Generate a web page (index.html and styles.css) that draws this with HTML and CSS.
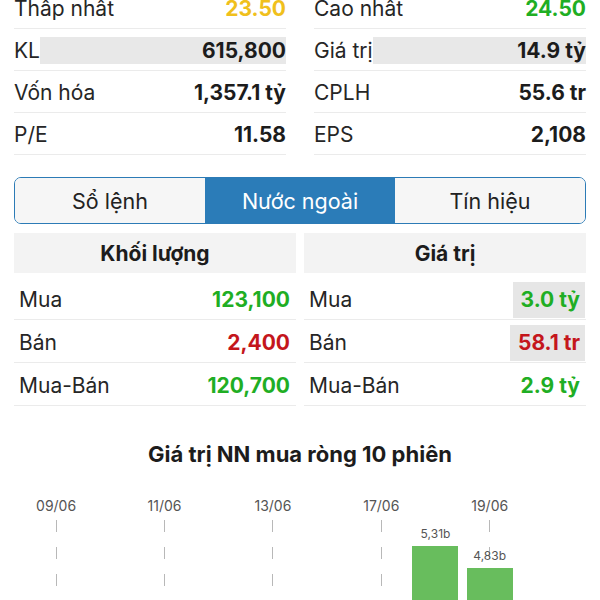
FILE: index.html
```html
<!DOCTYPE html>
<html lang="vi">
<head>
    <meta charset="UTF-8" />
    <meta name="viewport" content="width=device-width, initial-scale=1.0"/>
    <title>Nước ngoài</title>
    <link rel="stylesheet" href="styles.css">
</head>
<body>
    <div class="page">

        <!-- Thong tin co ban -->
        <div class="stats">
            <div class="stat-col">
                <div class="stat-row"><span class="label">Thấp nhất</span><span class="value yellow">23.50</span></div>
                <div class="stat-row"><span class="label">KL</span><span class="value shaded">615,800</span></div>
                <div class="stat-row"><span class="label">Vốn hóa</span><span class="value">1,357.1 tỷ</span></div>
                <div class="stat-row"><span class="label">P/E</span><span class="value">11.58</span></div>
            </div>
            <div class="stat-col">
                <div class="stat-row"><span class="label">Cao nhất</span><span class="value green">24.50</span></div>
                <div class="stat-row"><span class="label">Giá trị</span><span class="value shaded">14.9 tỷ</span></div>
                <div class="stat-row"><span class="label">CPLH</span><span class="value">55.6 tr</span></div>
                <div class="stat-row"><span class="label">EPS</span><span class="value">2,108</span></div>
            </div>
        </div>

        <!-- Tabs -->
        <div class="tabs">
            <div class="tab">Sổ lệnh</div>
            <div class="tab active">Nước ngoài</div>
            <div class="tab">Tín hiệu</div>
        </div>

        <!-- Giao dich nuoc ngoai -->
        <div class="foreign">
            <div class="panel">
                <div class="panel-head">Khối lượng</div>
                <div class="panel-row"><span class="label">Mua</span><span class="value green">123,100</span></div>
                <div class="panel-row"><span class="label">Bán</span><span class="value red">2,400</span></div>
                <div class="panel-row"><span class="label">Mua-Bán</span><span class="value green">120,700</span></div>
            </div>
            <div class="panel">
                <div class="panel-head">Giá trị</div>
                <div class="panel-row"><span class="label">Mua</span><span class="value green flash">3.0 tỷ</span></div>
                <div class="panel-row"><span class="label">Bán</span><span class="value red flash">58.1 tr</span></div>
                <div class="panel-row"><span class="label">Mua-Bán</span><span class="value green">2.9 tỷ</span></div>
            </div>
        </div>

        <!-- Chart -->
        <h2 class="chart-title">Giá trị NN mua ròng 10 phiên</h2>
        <div class="chart">
            <div class="col tick"><span class="date">09/06</span><div class="track"></div></div>
            <div class="col"><span class="date"></span><div class="track"></div></div>
            <div class="col tick"><span class="date">11/06</span><div class="track"></div></div>
            <div class="col"><span class="date"></span><div class="track"></div></div>
            <div class="col tick"><span class="date">13/06</span><div class="track"></div></div>
            <div class="col"><span class="date"></span><div class="track"></div></div>
            <div class="col tick"><span class="date">17/06</span><div class="track"></div></div>
            <div class="col">
                <span class="date"></span>
                <div class="track">
                    <span class="bar-val">5,31b</span>
                    <div class="bar" style="height: 234px"></div>
                </div>
            </div>
            <div class="col tick">
                <span class="date">19/06</span>
                <div class="track">
                    <span class="bar-val">4,83b</span>
                    <div class="bar" style="height: 212px"></div>
                </div>
            </div>
            <div class="col"><span class="date"></span><div class="track"></div></div>
        </div>

    </div>
</body>
</html>
```

FILE: styles.css
```css
html, body {
    overflow: hidden;
}

body {
    margin: 0;
    padding: 0;
    background: #fff;
    font-family: Inter, 'Noto Sans', sans-serif;
    color: #222;
}

.page {
    padding: 0 14px;
}

/* Stats */
.stats {
    display: grid;
    grid-template-columns: 1fr 1fr;
    column-gap: 28px;
    margin-top: -13px;
}

.stat-row {
    display: flex;
    align-items: center;
    box-sizing: border-box;
    height: 42px;
    padding-top: 1px;
    border-bottom: 1px solid #ebebeb;
    font-size: 21px;
}

.label {
    color: #262626;
    white-space: nowrap;
}

.value {
    flex: 1;
    text-align: right;
    font-weight: 700;
    color: #1c1c1c;
    white-space: nowrap;
}

.value.shaded {
    background: #e8e8e8;
    line-height: 27px;
}

.yellow { color: #f0c01c; }
.green  { color: #1fae24; }
.red    { color: #c4161c; }

/* Tabs */
.tabs {
    display: grid;
    grid-template-columns: 1fr 1fr 1fr;
    margin-top: 22px;
    height: 45px;
    border: 1.5px solid #2c7bb6;
    border-radius: 7px;
    overflow: hidden;
}

.tab {
    display: flex;
    justify-content: center;
    align-items: center;
    background: #f6f6f6;
    font-size: 21.5px;
    color: #222;
}

.tab.active {
    background: #2b7cb8;
    color: #fff;
}

/* Foreign trading */
.foreign {
    display: grid;
    grid-template-columns: 1fr 1fr;
    column-gap: 8px;
    margin-top: 9px;
}

.panel-head {
    height: 40px;
    line-height: 42px;
    background: #f3f3f3;
    text-align: center;
    font-size: 21px;
    font-weight: 700;
    color: #1c1c1c;
    margin-bottom: 4px;
}

.panel-row {
    display: flex;
    align-items: center;
    height: 43px;
    box-sizing: border-box;
    padding: 3px 6px 0 5px;
    border-bottom: 1px solid #ebebeb;
    font-size: 21px;
}

.value.flash {
    flex: none;
    margin-left: auto;
    margin-right: -5px;
    padding: 0 5px 0 8px;
    line-height: 36px;
    background: #e6e6e6;
}

/* Chart */
.chart-title {
    margin: 35px 0 0;
    text-align: center;
    font-size: 22px;
    line-height: 26px;
    font-weight: 700;
    color: #1c1c1c;
}

.chart {
    display: grid;
    grid-template-columns: repeat(10, 1fr);
    padding: 0 15px;
    margin-top: 30px;
}

.col {
    display: flex;
    flex-direction: column;
    align-items: center;
}

.date {
    height: 18px;
    line-height: 18px;
    font-size: 14px;
    color: #555;
    margin-bottom: 5px;
}

.track {
    width: 100%;
    height: 260px;
    display: flex;
    flex-direction: column;
    justify-content: flex-end;
    align-items: center;
}

.tick .track {
    background-image: repeating-linear-gradient(to bottom, #b8b8b8 0 12px, transparent 12px 27px);
    background-size: 1px 100%;
    background-position: center top;
    background-repeat: no-repeat;
}

.bar-val {
    font-size: 12px;
    line-height: 14px;
    color: #555;
    margin-bottom: 5px;
}

.bar {
    width: 46px;
    background: #68bd5d;
}
```
